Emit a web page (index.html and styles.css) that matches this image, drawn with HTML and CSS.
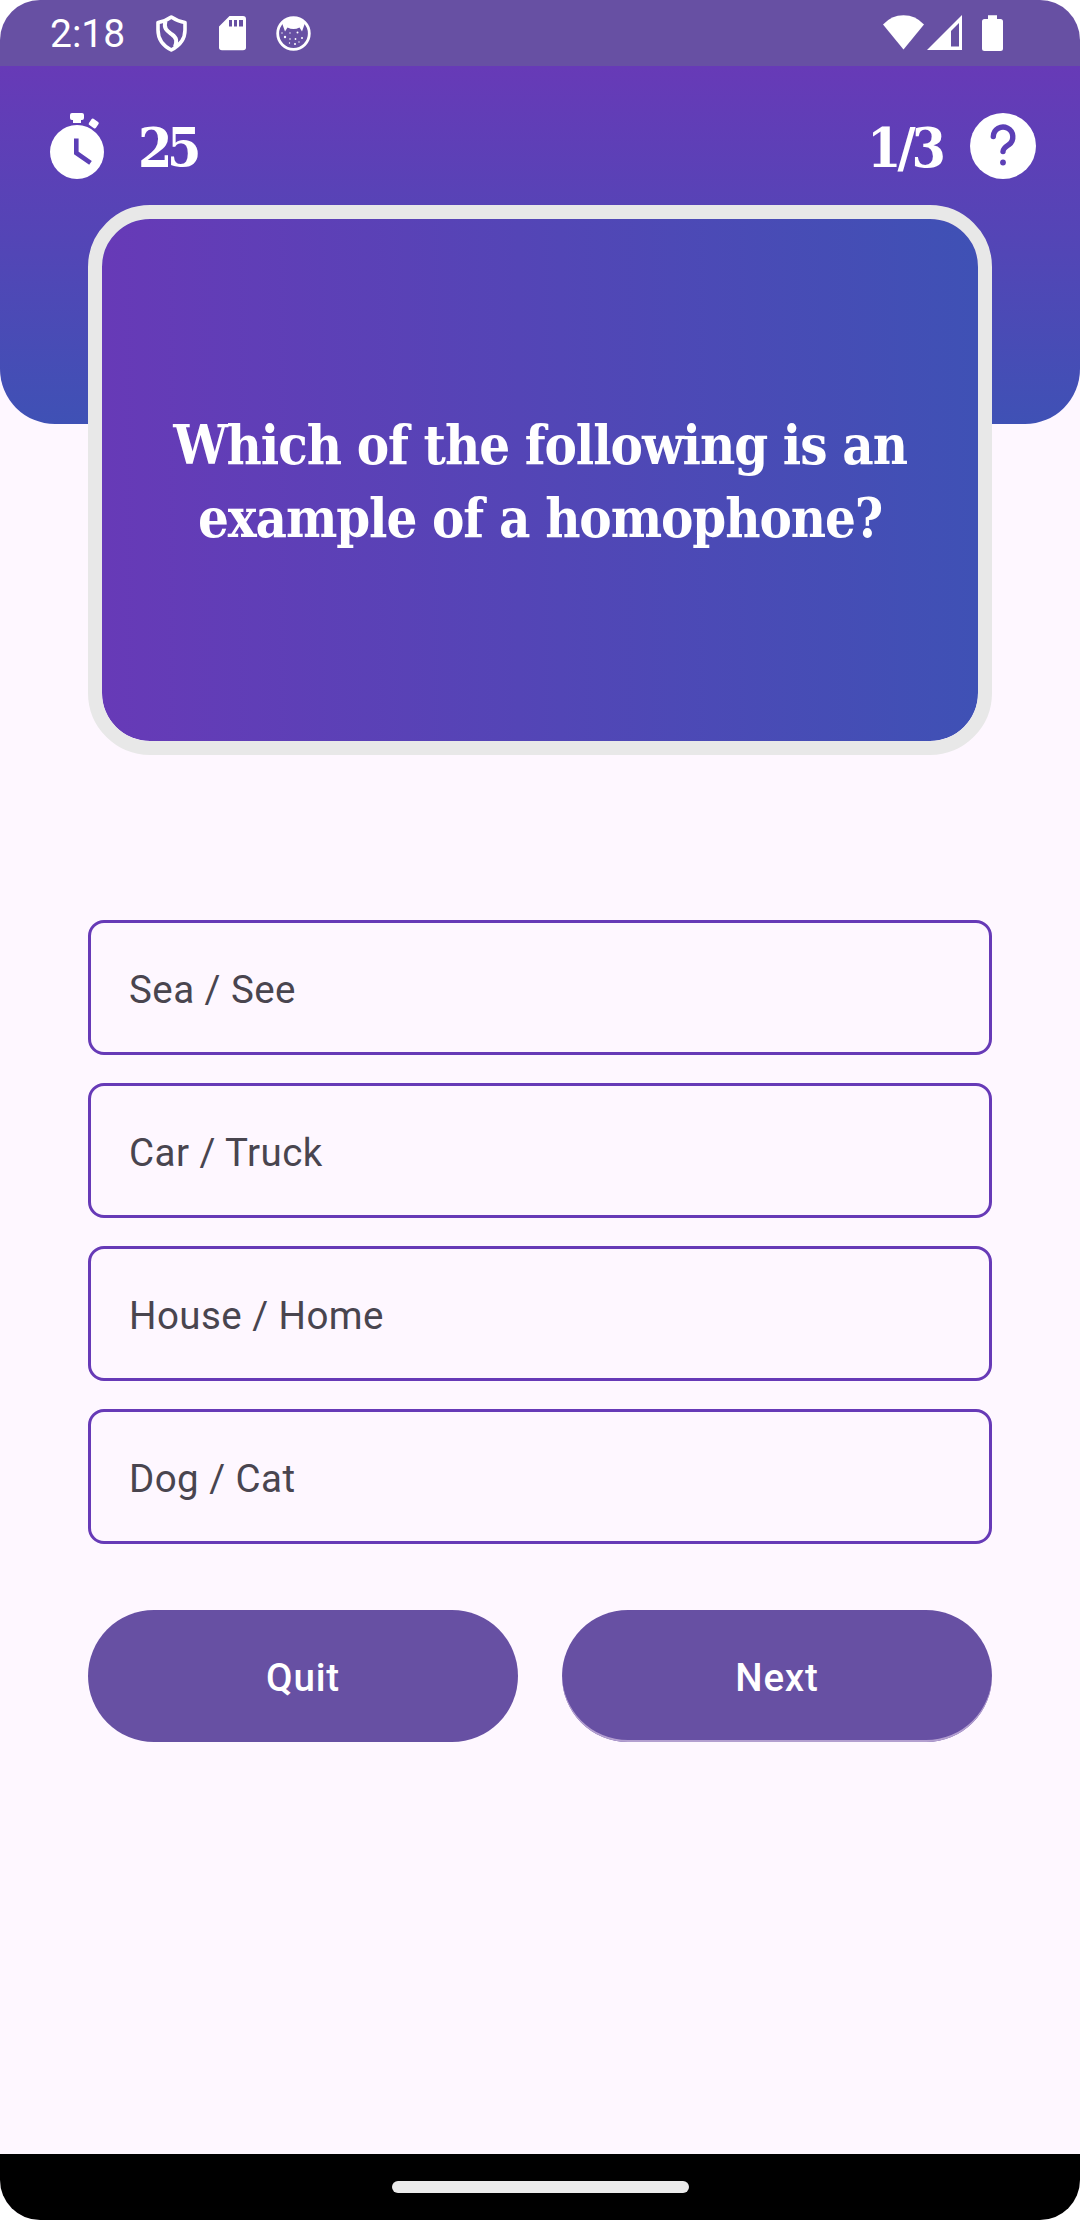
FILE: index.html
```html
<!DOCTYPE html>
<html lang="en">
<head>
<meta charset="utf-8">
<title>Quiz</title>
<link rel="stylesheet" href="styles.css">
</head>
<body>
<div class="screen">
  <header class="status-bar">
    <span class="clock">2:18</span>
    <svg class="status-left" viewBox="150 10 170 46" width="170" height="46" fill="#fff">
      <path d="M171.300 17 Q178 21.500 185 22.500 V30 C185 40 179 46 171.300 50 C163.500 46 158 40 158 30 V22.500 Q165 21.500 171.300 17Z" fill="none" stroke="#fff" stroke-width="3.600" stroke-linejoin="round"/>
      <path d="M165.500 21 C163 29 168 31.500 172 34.500 C177 38 177 41 175 47" fill="none" stroke="#fff" stroke-width="4"/>
      <path fill-rule="evenodd" d="M229.500 16 H243 Q246 16 246 19 V47.500 Q246 50.300 243 50.300 H222 Q219 50.300 219 47.500 V26.500Z M229 20 V26.500 H232 V20Z M234 20 V26.500 H237 V20Z M239 20 V26.500 H243 V20Z"/>
      <circle cx="293.500" cy="33.500" r="15.800" fill="none" stroke="#fff" stroke-width="2.800"/>
      <path d="M282 23 Q286 17.500 293.500 17.500 T305 23 L302 31.500 L299.500 27.500 Q293.500 30.500 287.500 27.500 L285 31.500Z"/>
      <g><circle cx="285" cy="37" r="1.200"/><circle cx="290" cy="39" r=".8"/><circle cx="297.500" cy="32.500" r="1"/><circle cx="302" cy="38" r="1"/><circle cx="295" cy="44" r="1"/><circle cx="289.500" cy="43" r=".7"/><circle cx="290" cy="33" r=".7"/><circle cx="295.500" cy="39" r=".9"/><circle cx="282" cy="33" r=".7"/><circle cx="299" cy="42" r=".7"/></g>
    </svg>
    <svg class="status-right" viewBox="880 10 126 46" width="126" height="46" fill="#fff">
      <path d="M903.500 49.500 L883 24.500 Q891.500 15.300 903.500 15.300 T924 24.500Z"/>
      <path fill-rule="evenodd" d="M927 50 L962 15 V50Z M951 31 V46.500 H959 V23Z"/>
      <path d="M988 15.300 H997 V19 H1000.500 Q1003 19 1003 21.500 V48.500 Q1003 51 1000.500 51 H984.500 Q982 51 982 48.500 V21.500 Q982 19 984.500 19 H988Z"/>
    </svg>
  </header>

  <main class="quiz">
    <section class="banner">
      <div class="timer">
        <svg viewBox="44 113 66 66" width="66" height="66" fill="#fff">
          <circle cx="77" cy="152" r="27"/>
          <path d="M72 113 H82 Q84 113 84 115 V118 Q84 120 82 120 H81 V123 H73 V120 H72 Q70 120 70 118 V115 Q70 113 72 113Z"/>
          <rect x="89.500" y="119.800" width="8.500" height="7.500" rx="1.500" transform="rotate(34 93.800 123.500)"/>
          <path d="M76.300 138.500 V153 L90.500 162.800" fill="none" stroke="#5c3fb6" stroke-width="4.600"/>
        </svg>
        <span>25</span>
      </div>
      <div class="progress">
        <span>1/3</span>
        <svg viewBox="970 113 66 66" width="66" height="66">
          <circle cx="1003" cy="146" r="33" fill="#fff"/>
          <path d="M993.300 136.500 A9.750 9.750 0 1 1 1009 144.500 Q1003 148.500 1003 151.500" fill="none" stroke="#5c3fb6" stroke-width="5.400" stroke-linecap="round"/>
          <circle cx="1003" cy="162.500" r="2.900" fill="#5c3fb6"/>
        </svg>
      </div>
    </section>

    <section class="question-card">
      <h1 class="question"><span class="line">Which of the following is an</span> <span class="line">example of a homophone?</span></h1>
    </section>

    <section class="options">
      <button class="option">Sea / See</button>
      <button class="option">Car / Truck</button>
      <button class="option">House / Home</button>
      <button class="option">Dog / Cat</button>
    </section>

    <section class="actions">
      <button class="action">Quit</button>
      <button class="action next">Next</button>
    </section>
  </main>

  <footer class="nav-bar"><div class="handle"></div></footer>
</div>
</body>
</html>
```
FILE: styles.css
```css
* { box-sizing: border-box; }
body { margin: 0; background: #fff; font-family: Roboto, "Liberation Sans", sans-serif; }
button { margin: 0; font: inherit; border: 0; }
svg { display: block; flex: none; }

.screen {
  width: 1080px;
  height: 2220px;
  display: flex;
  flex-direction: column;
  overflow: hidden;
  border-radius: 40px;
  background: #fef7ff;
}

.status-bar {
  flex: none;
  height: 66px;
  padding: 0 74px 0 50px;
  display: flex;
  align-items: center;
  background: #6750a3;
}
.clock { width: 100px; color: #fff; font-size: 39px; line-height: 46px; padding-top: 2px; }
.status-right { margin-left: auto; }

.quiz { flex: 1; display: flex; flex-direction: column; }

.banner {
  height: 358px;
  padding: 47px 44px 0;
  display: flex;
  justify-content: space-between;
  align-items: flex-start;
  border-radius: 0 0 55px 55px;
  background: linear-gradient(#673ab7, #3f51b5);
}
.timer, .progress {
  display: flex;
  align-items: center;
  gap: 28px;
  color: #fff;
  font-family: "Roboto Slab", "DejaVu Serif Condensed", "DejaVu Serif", serif;
  font-stretch: condensed;
  font-weight: 700;
  font-size: 55px;
  line-height: 62px;
}
.timer span, .progress span { padding-top: 4px; letter-spacing: -4px; }
.timer span { letter-spacing: -5.5px; }

.question-card {
  height: 550px;
  margin: -219px 88px 0;
  padding-top: 4px;
  display: flex;
  align-items: center;
  justify-content: center;
  border: 14px solid #e8e8e8;
  border-radius: 62px;
  background: linear-gradient(90deg, #673ab7, #3f51b5) padding-box;
}
.question {
  margin: 0;
  color: #fff;
  font-family: "Roboto Slab", "DejaVu Serif Condensed", "DejaVu Serif", serif;
  font-stretch: condensed;
  font-weight: 700;
  font-size: 54px;
  line-height: 73px;
  text-align: center;
}
.line { display: block; white-space: nowrap; letter-spacing: -1.1px; }

.options {
  margin: 165px 88px 0;
  display: flex;
  flex-direction: column;
  gap: 28px;
}
.option {
  height: 135px;
  padding: 3px 38px 0;
  text-align: left;
  color: #49454f;
  font-size: 38.5px;
  letter-spacing: .45px;
  background: transparent;
  border: 3px solid #673ab7;
  border-radius: 16px;
}

.actions { margin: 66px 88px 0; display: flex; gap: 44px; }
.action {
  flex: 1;
  height: 132px;
  padding-top: 4px;
  border-radius: 66px;
  background: #6750a3;
  color: #fff;
  font-size: 38.5px;
  font-weight: 500;
  letter-spacing: .8px;
}
.next { box-shadow: inset 0 -2px 0 #b39fd0; }

.nav-bar {
  flex: none;
  height: 66px;
  display: flex;
  align-items: center;
  justify-content: center;
  background: #000;
}
.handle { width: 297px; height: 12px; border-radius: 6px; background: #ebebeb; }
```
